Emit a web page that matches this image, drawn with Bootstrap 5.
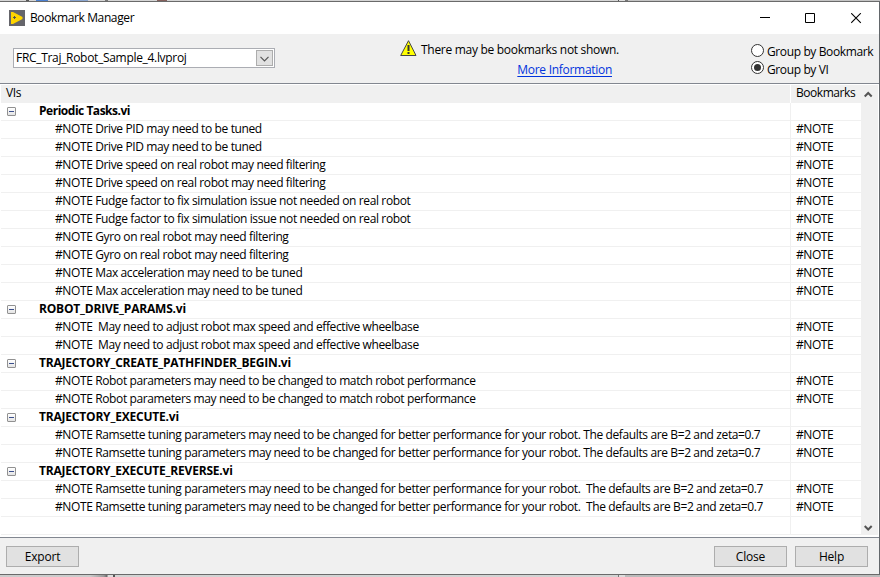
<!DOCTYPE html>
<html lang="en">
<head>
<meta charset="utf-8">
<title>Bookmark Manager</title>
<link href="https://cdn.jsdelivr.net/npm/bootstrap@5.3.0/dist/css/bootstrap.min.css" rel="stylesheet">
<style>
body{width:880px;height:577px;overflow:hidden;background:#cfcfcf;font:12px/18px "Open Sans","Noto Sans",sans-serif;letter-spacing:-.38px;color:#000}
svg{display:block;flex:none}
.desk-top{height:1px;background:linear-gradient(90deg,#d5d5d5 0 26px,#555 26px 29px,#d5d5d5 29px 36px,#4a7fd0 36px 48px,#d5d5d5 48px 70px,#8aa5cf 70px 88px,#d5d5d5 88px 105px,#777 105px 108px,#d5d5d5 108px 157px,#84605c 157px 167px,#d5d5d5 167px 618px,#555 618px 619px,#ddd 619px 625px,#777 625px 628px,#c4c4c4 628px)}
.desk-bottom{height:2px;background:linear-gradient(90deg,#ccc 0 90px,#999 104px,#666 107px,#ddd 108px 113px,#555 113px 115px,#d3d3d3 115px 618px,#777 618px 619px,#ddd 619px 625px,#bbb 625px)}
.window{height:574px;border-top:1px solid #6a6a6a;border-bottom:1px solid #6a6a6a;border-right:1px solid #63676b;background:#f0f0f0}
.titlebar{height:32px;background:#fff;padding-left:9px}
.window-title{margin-left:5px}
.controls{margin-left:auto;padding-right:17px;gap:35px}
.toolbar{height:49px;padding-left:13px}
.project{width:262px;height:20px;margin-top:14px;border:1px solid #abadb3;background:#fff;padding:0 1px 0 2px;letter-spacing:-.31px}
.project-arrow{width:17px;height:16px;border:1px solid #adadad;background:#e1e1e1;padding:5px 0 0 3px}
.notice{margin:6px 0 0 125px;width:216px;line-height:20px;letter-spacing:-.29px}
.notice-icon{margin-right:4px}
.notice a{color:#0033dd;text-decoration:underline;text-underline-offset:2px}
.grouping{margin:8px 0 0 135px;line-height:17px}
.radio-icon{margin-right:3px}
.radio-label{padding-top:1px}
.tree{height:455px;border-top:1px solid #828790;border-bottom:1px solid #828790;background:#fff;padding:1px 1px 2px 1px}
.tree-row{height:18px;line-height:16px;border-bottom:1px solid #f0f0f0;white-space:pre}
.tree-head{height:18px;background:#f0f0f0;line-height:16px}
.vi-cell{width:790px;border-right:1px solid #f0f0f0}
.tree-head .vi-cell{padding-left:5px;border-color:#fff}
.toggle-box{width:9px;height:9px;margin:4px 23px 0 6px;border:1px solid #919191;border-radius:1px;background:linear-gradient(#fff,#e4e4e4);padding:3px 1px}
.toggle-box i{display:block;height:1px;background:#3b4f8c}
.vi-name{font-weight:700;letter-spacing:-.2px}
.tree-row:nth-child(2) .vi-name{letter-spacing:-.48px}
.note-text{padding-left:54px}
.tag-cell{padding-left:5px;letter-spacing:-.45px}
.scroller{width:17px;background:#f0f0f0;padding:6px 0 4px 3px}
.footer-bar{height:36px;padding:8px 11px 0 6px;gap:8px}
.btn-win{width:73px;height:21px;padding:0;border:1px solid #adadad;border-radius:0;background:#e1e1e1;color:#000;font-size:12px;line-height:19px;letter-spacing:-.2px}
</style>
<script src="https://cdn.jsdelivr.net/npm/bootstrap@5.3.0/dist/js/bootstrap.bundle.min.js"></script>
</head>
<body>
<div class="desk-top"></div>
<main class="window d-flex flex-column">
  <header class="titlebar d-flex align-items-center">
    <svg width="16" height="16"><path fill="#65656b" d="M0 0h16v16H0z"/><path fill="#ffd500" d="M2 2h2l9.500 5v2L4 14H2z"/><path stroke="#55554b" d="M4 7.500h3M5.500 6v3"/></svg>
    <span class="window-title">Bookmark Manager</span>
    <div class="controls d-flex align-items-center">
      <svg width="11" height="11"><path stroke="#000" d="M1 4.500h10"/></svg>
      <svg width="11" height="11"><path fill="none" stroke="#000" d="M.5.5h9v9h-9z"/></svg>
      <svg width="11" height="11"><path stroke="#000" stroke-width="1.1" d="M.2.2l9.600 9.600M9.800.2L.2 9.800"/></svg>
    </div>
  </header>
  <section class="toolbar d-flex align-items-start">
    <div class="project d-flex align-items-center justify-content-between"><span>FRC_Traj_Robot_Sample_4.lvproj</span>
      <span class="project-arrow"><svg width="9" height="6"><path fill="none" stroke="#555" stroke-width="1.2" d="M.5.8l4 4 4-4"/></svg></span>
    </div>
    <div class="notice text-nowrap">
      <div class="d-flex"><svg class="notice-icon" width="17" height="17"><path fill="#ff0" stroke="#444" stroke-linejoin="round" d="M8.500.7l7.500 14.800H.7z"/><path fill="#333" d="M7.500 5h2v6h-2zM7.500 12h2v2h-2z"/></svg><span>There may be bookmarks not shown.</span></div>
      <div class="text-end pe-1"><a href="#">More Information</a></div>
    </div>
    <div class="grouping text-nowrap">
      <div class="d-flex"><svg class="radio-icon" width="13" height="17"><circle cx="6.500" cy="8.500" r="6" fill="#fff" stroke="#333"/></svg><span class="radio-label">Group by Bookmark</span></div>
      <div class="d-flex"><svg class="radio-icon" width="13" height="17"><circle cx="6.500" cy="7.500" r="6" fill="#fff" stroke="#333"/><circle cx="6.500" cy="7.500" r="3.500" fill="#333"/></svg><span class="radio-label">Group by VI</span></div>
    </div>
  </section>
  <section class="tree d-flex">
    <div class="flex-grow-1" id="rows">
      <div class="tree-head d-flex"><div class="vi-cell">VIs</div><div class="tag-cell">Bookmarks</div></div>
    </div>
    <div class="scroller d-flex flex-column justify-content-between">
      <svg width="9" height="7"><path fill="none" stroke="#555" stroke-width="2" d="M.7 5.500l3.500-3.500 3.500 3.500"/></svg>
      <svg width="9" height="7"><path fill="none" stroke="#555" stroke-width="2" d="M.7 2l3.500 3.500L7.700 2"/></svg>
    </div>
  </section>
  <footer class="footer-bar d-flex">
    <button class="btn btn-win me-auto">Export</button>
    <button class="btn btn-win">Close</button>
    <button class="btn btn-win">Help</button>
  </footer>
</main>
<div class="desk-bottom"></div>
<script>
// Each group lists its VI name followed by [note, repeat count] pairs.
const groups = [
  ["Periodic Tasks.vi", ["Drive PID may need to be tuned", 2], ["Drive speed on real robot may need filtering", 2], ["Fudge factor to fix simulation issue not needed on real robot", 2], ["Gyro on real robot may need filtering", 2], ["Max acceleration may need to be tuned", 2]],
  ["ROBOT_DRIVE_PARAMS.vi", [" May need to adjust robot max speed and effective wheelbase", 2]],
  ["TRAJECTORY_CREATE_PATHFINDER_BEGIN.vi", ["Robot parameters may need to be changed to match robot performance", 2]],
  ["TRAJECTORY_EXECUTE.vi", ["Ramsette tuning parameters may need to be changed for better performance for your robot. The defaults are B=2 and zeta=0.7", 2]],
  ["TRAJECTORY_EXECUTE_REVERSE.vi", ["Ramsette tuning parameters may need to be changed for better performance for your robot.  The defaults are B=2 and zeta=0.7", 2]]
];
const row = (cell, tag) => `<div class="tree-row d-flex"><div class="vi-cell d-flex">${cell}</div><div class="tag-cell">${tag}</div></div>`;
let html = "";
for (const [name, ...notes] of groups) {
  html += row(`<span class="toggle-box"><i></i></span><span class="vi-name">${name}</span>`, "");
  for (const [text, count] of notes) html += row(`<span class="note-text">#NOTE ${text}</span>`, "#NOTE").repeat(count);
}
document.getElementById("rows").insertAdjacentHTML("beforeend", html + row("", ""));
</script>
</body>
</html>
